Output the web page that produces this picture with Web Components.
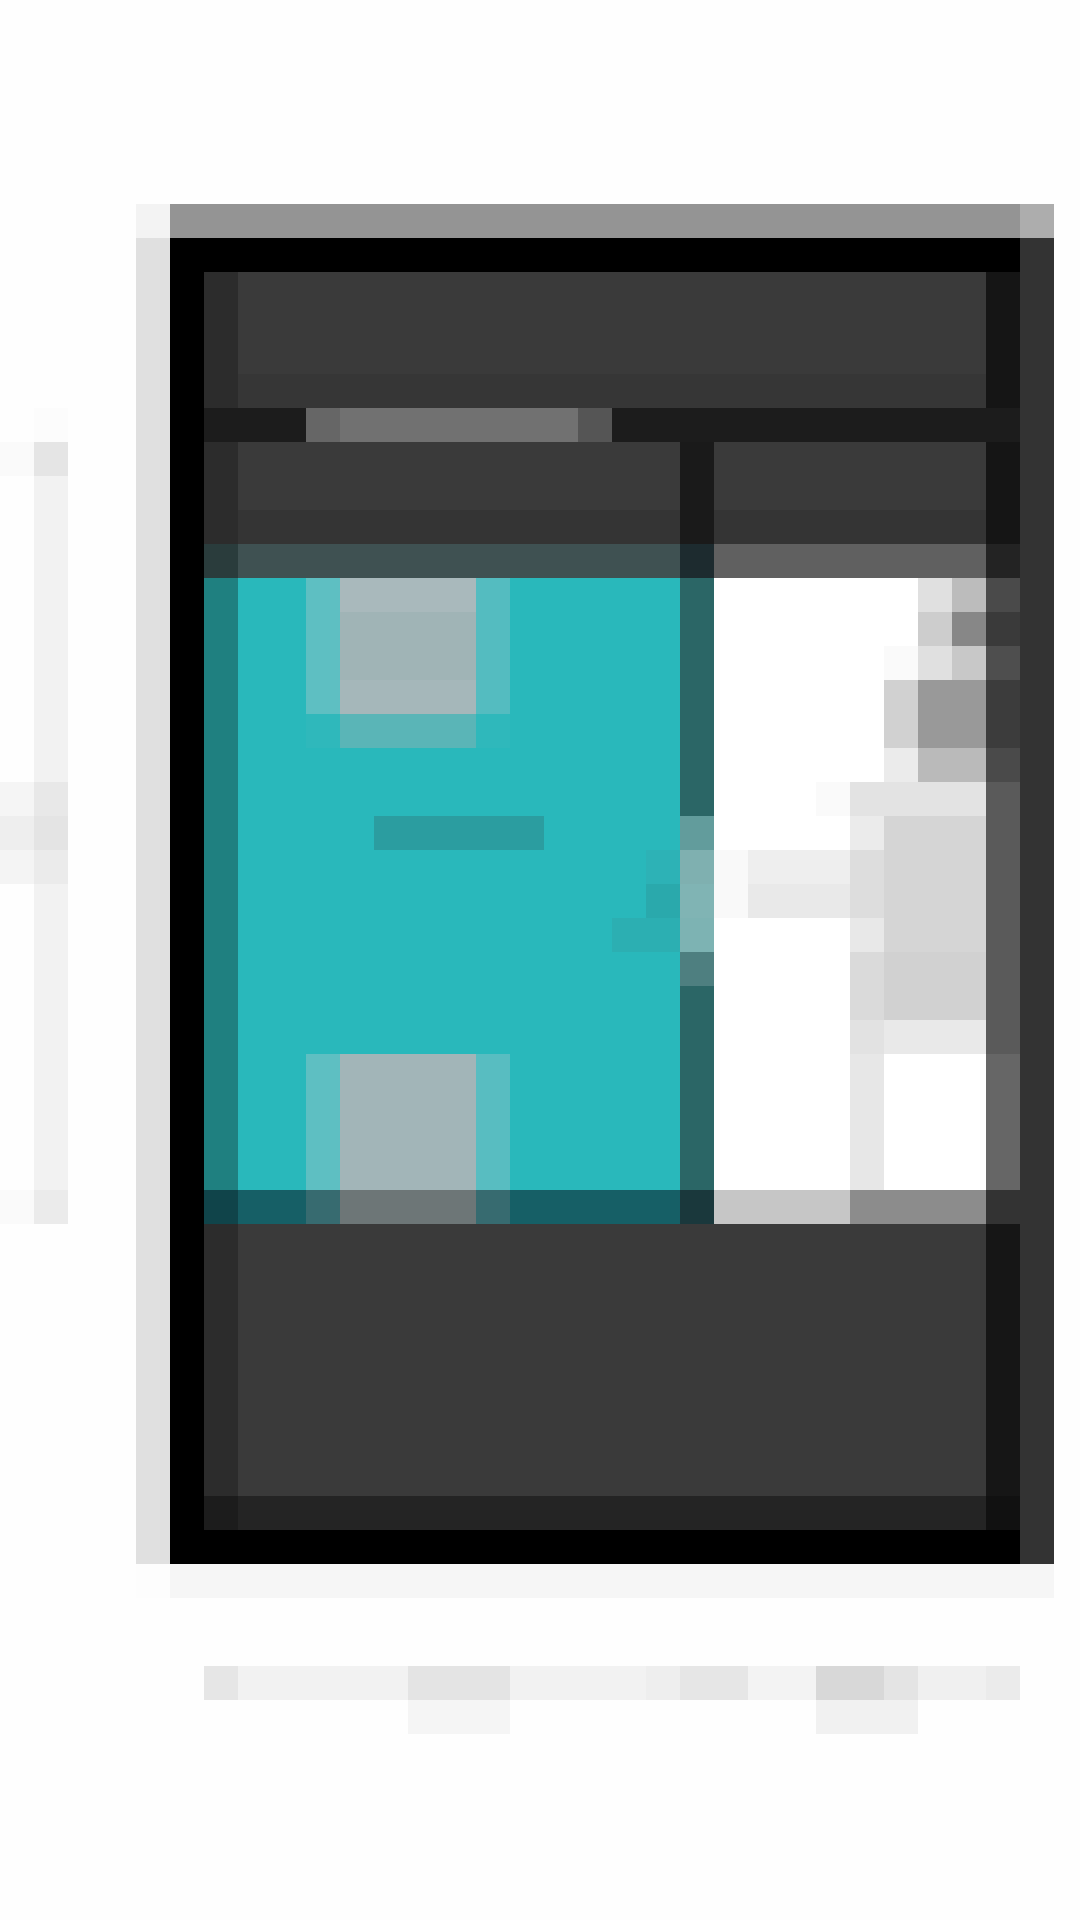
<!DOCTYPE html>
<html>
<head>
<meta charset="utf-8">
<title>Thumbnail</title>
<style>
  html, body { margin: 0; background: #fefefe; }
</style>
</head>
<body>
<thumb-page>
  <edge-strip></edge-strip>
  <app-window></app-window>
  <caption-strip></caption-strip>
</thumb-page>

<script>
// the reference is a tiny thumbnail blown up, every block is 34px
const CELL = 34;

class ThumbPage extends HTMLElement {
  constructor() {
    super();
    this.attachShadow({ mode: "open" });
  }

  connectedCallback() {
    this.shadowRoot.innerHTML = /*html*/ `
      <style>
        :host {
          display: grid;
          grid-template-columns: repeat(32, ${CELL}px);
          grid-template-rows: repeat(57, ${CELL}px);
          width: 1080px;
          height: 1920px;
          overflow: hidden;
          filter: blur(0.7px);
        }
      </style>
      <slot></slot>
    `;
  }
}

// a block of cells, rects are [row, lastRow, col, lastCol, colour] in page cells
class CellPatch extends HTMLElement {
  constructor() {
    super();
    this.attachShadow({ mode: "open" });
  }

  connectedCallback() {
    const { row, col, rows, cols, rects } = this.constructor.patch;
    const items = rects.map(([r1, r2, c1, c2, colour]) => `
      <div style="grid-area: ${r1 - row + 1} / ${c1 - col + 1} / ${r2 - row + 2} / ${c2 - col + 2}; background: ${colour}"></div>
    `).join("");
    this.shadowRoot.innerHTML = /*html*/ `
      <style>
        :host {
          display: grid;
          grid-row: ${row + 1} / span ${rows};
          grid-column: ${col + 1} / span ${cols};
          grid-template-columns: repeat(${cols}, ${CELL}px);
          grid-template-rows: repeat(${rows}, ${CELL}px);
        }
      </style>
      ${items}
    `;
  }
}

class EdgeStrip extends CellPatch {
  static patch = {
    row: 12, col: 0, rows: 24, cols: 2,
    rects: [
      [12, 12, 1, 1, "#fcfcfc"],
      [13, 13, 0, 0, "#fafafa"],
      [13, 13, 1, 1, "#e5e5e5"],
      [14, 34, 1, 1, "#f2f2f2"],
      [23, 23, 0, 0, "#f5f5f5"],
      [23, 23, 1, 1, "#e8e8e8"],
      [24, 24, 0, 0, "#eeeeee"],
      [24, 24, 1, 1, "#e4e4e4"],
      [25, 25, 0, 0, "#f4f4f4"],
      [25, 25, 1, 1, "#ebebeb"],
      [35, 35, 0, 0, "#fafafa"],
      [35, 35, 1, 1, "#ebebeb"],
    ],
  };
}

const TEAL = "#29b8bb";

class AppWindow extends CellPatch {
  static patch = {
    row: 6, col: 4, rows: 41, cols: 27,
    rects: [
      // frame
      [6, 6, 4, 4, "#f3f3f3"],
      [6, 6, 5, 29, "#949494"],
      [6, 6, 30, 30, "#adadad"],
      [7, 45, 4, 4, "#e0e0e0"],
      [7, 45, 5, 29, "#000000"],
      [7, 45, 30, 30, "#333333"],
      [46, 46, 4, 4, "#fdfdfd"],
      [46, 46, 5, 30, "#f6f6f6"],

      // header
      [8, 11, 6, 6, "#2c2c2c"],
      [8, 11, 7, 28, "#3a3a3a"],
      [11, 11, 7, 28, "#363636"],
      [8, 11, 29, 29, "#151515"],
      [12, 12, 6, 29, "#1c1c1c"],
      [12, 12, 9, 9, "#666666"],
      [12, 12, 10, 16, "#717171"],
      [12, 12, 17, 17, "#555555"],

      // tab row
      [13, 15, 6, 6, "#2c2c2c"],
      [13, 15, 7, 28, "#3a3a3a"],
      [15, 15, 7, 28, "#343434"],
      [13, 15, 20, 20, "#1a1a1a"],
      [13, 15, 29, 29, "#151515"],
      [16, 16, 6, 6, "#2a3c3c"],
      [16, 16, 7, 19, "#3f5152"],
      [16, 16, 20, 20, "#1d2b2f"],
      [16, 16, 21, 28, "#606060"],
      [16, 16, 29, 29, "#232323"],

      // teal panel
      [17, 34, 6, 6, "#1f8080"],
      [17, 34, 7, 19, TEAL],
      [17, 34, 20, 20, "#2b6666"],
      [17, 20, 9, 9, "#5ebfc2"],
      [17, 20, 10, 13, "#a0b4b6"],
      [17, 17, 10, 13, "#a9b9bc"],
      [20, 20, 10, 13, "#a5b7ba"],
      [17, 20, 14, 14, "#54bcc0"],
      [21, 21, 9, 9, "#2fb8bb"],
      [21, 21, 10, 13, "#5ab5b7"],
      [21, 21, 14, 14, "#2fb8bb"],
      [24, 24, 11, 15, "#2b9da0"],
      [24, 24, 20, 20, "#629c9c"],
      [25, 25, 19, 19, "#2db2b6"],
      [25, 25, 20, 20, "#7fb0b0"],
      [26, 26, 19, 19, "#2aa9ac"],
      [26, 26, 20, 20, "#80b4b4"],
      [27, 27, 18, 19, "#2cafb2"],
      [27, 27, 20, 20, "#7db3b3"],
      [28, 28, 20, 20, "#4e7f80"],
      [31, 34, 9, 9, "#5ebfc2"],
      [31, 34, 10, 13, "#a2b5b8"],
      [31, 34, 14, 14, "#58bdc1"],
      [35, 35, 6, 6, "#10444a"],
      [35, 35, 7, 19, "#165f66"],
      [35, 35, 9, 9, "#376b70"],
      [35, 35, 10, 13, "#6d7677"],
      [35, 35, 14, 14, "#376b70"],
      [35, 35, 20, 20, "#1a383c"],

      // white panel
      [17, 34, 21, 28, "#ffffff"],
      [17, 17, 27, 27, "#e0e0e0"],
      [17, 17, 28, 28, "#bcbcbc"],
      [17, 17, 29, 29, "#4a4a4a"],
      [18, 18, 27, 27, "#cdcdcd"],
      [18, 18, 28, 28, "#878787"],
      [18, 18, 29, 29, "#3a3a3a"],
      [19, 19, 26, 26, "#fafafa"],
      [19, 19, 27, 27, "#e0e0e0"],
      [19, 19, 28, 28, "#c8c8c8"],
      [19, 19, 29, 29, "#4e4e4e"],
      [20, 21, 26, 26, "#d1d1d1"],
      [20, 21, 27, 28, "#999999"],
      [20, 21, 29, 29, "#3c3c3c"],
      [22, 22, 26, 26, "#ebebeb"],
      [22, 22, 27, 28, "#bababa"],
      [22, 22, 29, 29, "#4a4a4a"],
      [23, 23, 24, 24, "#fafafa"],
      [23, 23, 25, 28, "#e3e3e3"],
      [23, 30, 29, 29, "#5a5a5a"],
      [24, 24, 25, 25, "#ebebeb"],
      [24, 27, 26, 28, "#d5d5d5"],
      [25, 26, 21, 21, "#f9f9f9"],
      [25, 25, 22, 24, "#eeeeee"],
      [26, 26, 22, 24, "#e9e9e9"],
      [25, 26, 25, 25, "#dddddd"],
      [27, 27, 25, 25, "#e8e8e8"],
      [28, 29, 25, 25, "#dadada"],
      [28, 29, 26, 28, "#d1d1d1"],
      [30, 30, 25, 25, "#e2e2e2"],
      [30, 30, 26, 28, "#e9e9e9"],
      [31, 34, 25, 25, "#e7e7e7"],
      [31, 34, 29, 29, "#666666"],
      [35, 35, 21, 24, "#c6c6c6"],
      [35, 35, 25, 28, "#8c8c8c"],
      [35, 35, 29, 29, "#333333"],

      // lower dark area
      [36, 43, 6, 6, "#2c2c2c"],
      [36, 43, 7, 28, "#3a3a3a"],
      [36, 43, 29, 29, "#161616"],
      [44, 44, 6, 6, "#1c1c1c"],
      [44, 44, 7, 28, "#242424"],
      [44, 44, 29, 29, "#111111"],
    ],
  };
}

class CaptionStrip extends CellPatch {
  static patch = {
    row: 49, col: 6, rows: 2, cols: 24,
    rects: [
      [49, 49, 6, 6, "#e6e6e6"],
      [49, 49, 7, 11, "#f2f2f2"],
      [49, 49, 12, 14, "#e4e4e4"],
      [49, 49, 15, 18, "#f2f2f2"],
      [49, 49, 19, 19, "#eeeeee"],
      [49, 49, 20, 21, "#e6e6e6"],
      [49, 49, 22, 23, "#f3f3f3"],
      [49, 49, 24, 25, "#d8d8d8"],
      [49, 49, 26, 26, "#e4e4e4"],
      [49, 49, 27, 28, "#f0f0f0"],
      [49, 49, 29, 29, "#ebebeb"],
      [50, 50, 12, 14, "#f5f5f5"],
      [50, 50, 24, 26, "#f1f1f1"],
    ],
  };
}

customElements.define("thumb-page", ThumbPage);
customElements.define("edge-strip", EdgeStrip);
customElements.define("app-window", AppWindow);
customElements.define("caption-strip", CaptionStrip);
</script>
</body>
</html>
